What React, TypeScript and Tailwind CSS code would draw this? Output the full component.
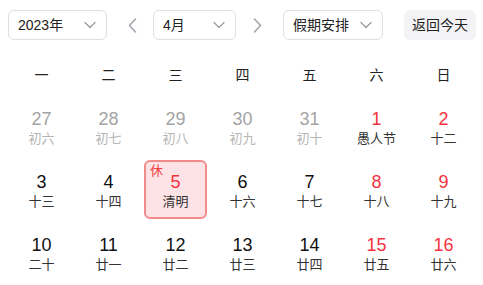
import React from "react";

type Day = { n: number; lunar: string; muted?: boolean; red?: boolean; rest?: boolean };

const weekdays = ["一", "二", "三", "四", "五", "六", "日"];

const rows: Day[][] = [
  [
    { n: 27, lunar: "初六", muted: true },
    { n: 28, lunar: "初七", muted: true },
    { n: 29, lunar: "初八", muted: true },
    { n: 30, lunar: "初九", muted: true },
    { n: 31, lunar: "初十", muted: true },
    { n: 1, lunar: "愚人节", red: true },
    { n: 2, lunar: "十二", red: true },
  ],
  [
    { n: 3, lunar: "十三" },
    { n: 4, lunar: "十四" },
    { n: 5, lunar: "清明", red: true, rest: true },
    { n: 6, lunar: "十六" },
    { n: 7, lunar: "十七" },
    { n: 8, lunar: "十八", red: true },
    { n: 9, lunar: "十九", red: true },
  ],
  [
    { n: 10, lunar: "二十" },
    { n: 11, lunar: "廿一" },
    { n: 12, lunar: "廿二" },
    { n: 13, lunar: "廿三" },
    { n: 14, lunar: "廿四" },
    { n: 15, lunar: "廿五", red: true },
    { n: 16, lunar: "廿六", red: true },
  ],
];

function ChevronDown() {
  return (
    <svg width="12" height="8" viewBox="0 0 12 8" fill="none">
      <path d="M1 1.5 L6 6.5 L11 1.5" stroke="#9a9ca3" strokeWidth="1.3" strokeLinecap="round" strokeLinejoin="round" />
    </svg>
  );
}

function Select({ label, width }: { label: string; width: string }) {
  return (
    <div className={`${width} h-[30px] flex items-center justify-between pl-[9px] pr-[10px] border border-[#dcdfe6] rounded-[6px] bg-white text-[14px] text-[#222]`}>
      <span>{label}</span>
      <ChevronDown />
    </div>
  );
}

function Arrow({ dir }: { dir: "left" | "right" }) {
  return (
    <svg width="9" height="15" viewBox="0 0 9 15" fill="none">
      <path
        d={dir === "left" ? "M7.5 1 L1.5 7.5 L7.5 14" : "M1.5 1 L7.5 7.5 L1.5 14"}
        stroke="#a4a6ad"
        strokeWidth="1.6"
        strokeLinecap="round"
        strokeLinejoin="round"
      />
    </svg>
  );
}

export default function App() {
  return (
    <div
      className="w-[483px] h-[285px] bg-white overflow-hidden"
      style={{ fontFamily: '"Liberation Sans", "Noto Sans CJK SC", sans-serif' }}
    >
      {/* 顶部工具栏 */}
      <div className="flex items-center pt-[10px] pl-[8px]">
        <Select label="2023年" width="w-[99px]" />
        <div className="ml-[21px] mr-[16px] flex items-center">
          <Arrow dir="left" />
        </div>
        <Select label="4月" width="w-[83px]" />
        <div className="ml-[17px] mr-[21px] flex items-center">
          <Arrow dir="right" />
        </div>
        <Select label="假期安排" width="w-[100px]" />
        <button className="ml-[21px] w-[72px] h-[30px] rounded-[6px] bg-[#f3f3f5] text-[14px] text-[#222]">
          返回今天
        </button>
      </div>

      {/* 星期 */}
      <div className="grid grid-cols-[repeat(7,67px)] px-[8px] mt-[20px] h-[30px] items-center text-[14px] text-[#222]">
        {weekdays.map((w) => (
          <div key={w} className="text-center">
            {w}
          </div>
        ))}
      </div>

      {/* 日期 */}
      <div className="px-[8px] mt-[5px]">
        {rows.map((row, i) => (
          <div key={i} className="grid grid-cols-[repeat(7,67px)] h-[63px]">
            {row.map((d) => (
              <div key={d.n} className="p-[2px]">
                <div
                  className={`relative h-full flex flex-col items-center justify-center pt-[2px] rounded-[6px] ${
                    d.rest ? "border-2 border-[#f28b8b] bg-[#fde3e5]" : ""
                  }`}
                >
                  {d.rest && (
                    <span className="absolute left-[4px] top-[1px] text-[13px] leading-[16px] text-[#f53b3b]">休</span>
                  )}
                  <span
                    className={`text-[18px] leading-[21px] ${
                      d.muted ? "text-[#a3a3a3]" : d.red ? "text-[#f5333f]" : "text-[#111]"
                    }`}
                  >
                    {d.n}
                  </span>
                  <span
                    className={`text-[13px] leading-[16px] mt-[1px] ${d.muted ? "text-[#b5b5b5]" : "text-[#333]"}`}
                  >
                    {d.lunar}
                  </span>
                </div>
              </div>
            ))}
          </div>
        ))}
      </div>
    </div>
  );
}
